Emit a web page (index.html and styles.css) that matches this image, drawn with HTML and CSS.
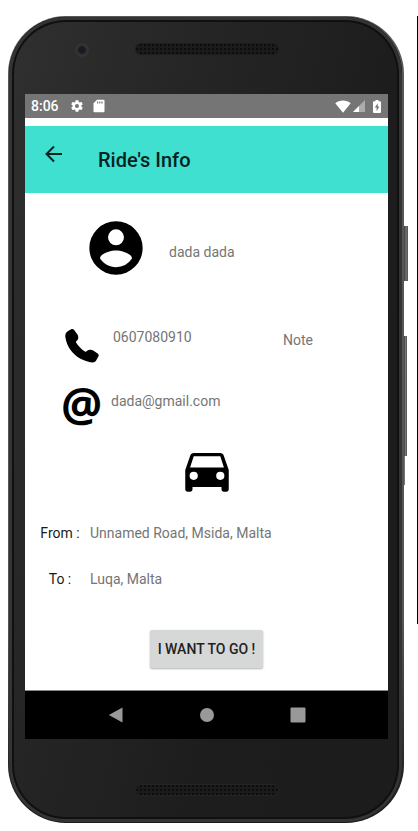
FILE: index.html
```html
<!DOCTYPE html>
<html lang="en">
<head>
<meta charset="utf-8">
<meta name="viewport" content="width=device-width, initial-scale=1">
<title>Ride's Info</title>
<link rel="stylesheet" href="styles.css">
</head>
<body>
<div class="phone">
  <span class="side-key power"></span>
  <span class="side-key volume"></span>
  <span class="side-key edge"></span>
  <div class="face">
    <div class="bezel bezel-top">
      <span class="camera"></span>
      <svg class="speaker" viewBox="0 0 144 12" aria-hidden="true">
        <defs><pattern id="mesh" width="4" height="4" patternUnits="userSpaceOnUse"><rect width="4" height="4" fill="#1b1b1b"/><circle cx="2" cy="2" r="1" fill="#080808"/></pattern></defs>
        <rect x="0.5" y="0.5" width="143" height="11" rx="5.5" fill="url(#mesh)" stroke="#1d1d1d"/>
      </svg>
    </div>
    <div class="screen">
      <div class="status">
        <span class="time">8:06</span>
        <svg class="gear" viewBox="0 0 24 24" aria-hidden="true"><path d="M19.43 12.98c.04-.32.07-.64.07-.98s-.03-.66-.07-.98l2.11-1.65c.19-.15.24-.42.12-.64l-2-3.46c-.12-.22-.39-.3-.61-.22l-2.49 1c-.52-.4-1.08-.73-1.69-.98l-.38-2.65A.49.49 0 0 0 14 2h-4c-.25 0-.46.18-.49.42l-.38 2.65c-.61.25-1.17.59-1.69.98l-2.49-1c-.23-.09-.49 0-.61.22l-2 3.46c-.13.22-.07.49.12.64l2.11 1.65c-.04.32-.07.65-.07.98s.03.66.07.98l-2.11 1.65c-.19.15-.24.42-.12.64l2 3.46c.12.22.39.3.61.22l2.49-1c.52.4 1.08.73 1.69.98l.38 2.65c.03.24.24.42.49.42h4c.25 0 .46-.18.49-.42l.38-2.65c.61-.25 1.17-.59 1.69-.98l2.49 1c.23.09.49 0 .61-.22l2-3.46c.12-.22.07-.49-.12-.64l-2.11-1.65zM12 15.5a3.5 3.5 0 1 1 0-7 3.5 3.5 0 0 1 0 7z"/></svg>
        <svg class="card" viewBox="0 0 12 14" aria-hidden="true"><path fill-rule="evenodd" d="M4 .8h6.500q1 0 1 1v10.400q0 1-1 1h-9q-1 0-1-1V4.300zM4 2.500v2h1.200v-2zm2.200 0v2h1.200v-2zm2.200 0v2h1.200v-2z"/></svg>
        <svg class="wifi" viewBox="0 0 16 13" aria-hidden="true"><path d="M8 12.800.3 3.200C4.500-.4 11.500-.4 15.700 3.200z"/></svg>
        <svg class="signal" viewBox="0 0 12 12" aria-hidden="true"><path fill-opacity=".4" d="M12 0v12H0z"/><path d="M6 6v6H0z"/></svg>
        <svg class="battery" viewBox="0 0 8 13" aria-hidden="true"><path fill-rule="evenodd" d="M2.500 0h3v1.200H7q1 0 1 1V12q0 1-1 1H1q-1 0-1-1V2.200q0-1 1-1h1.500zM4.700 3.200 1.800 7.600h1.800v3.600l2.800-4.600H4.700z"/></svg>
      </div>
      <header class="appbar">
        <button class="back" type="button" aria-label="Back"><svg viewBox="0 0 18 18" aria-hidden="true"><path d="M17 9H2M9 1.500 1.500 9 9 16.500" fill="none" stroke="#06231f" stroke-width="2"/></svg></button>
        <h1>Ride's Info</h1>
      </header>
      <main>
        <section class="profile">
          <svg viewBox="0 0 24 24" aria-hidden="true"><path d="M12 2a10 10 0 1 0 0 20 10 10 0 0 0 0-20zm0 3a3 3 0 1 1 0 6 3 3 0 0 1 0-6zm0 14.200c-2.500 0-4.710-1.280-6-3.220.03-1.990 4-3.080 6-3.080s5.970 1.090 6 3.080A7.200 7.200 0 0 1 12 19.200z"/></svg>
          <span>dada dada</span>
        </section>
        <section class="contact">
          <svg class="handset" viewBox="0 0 34 34" aria-hidden="true"><path d="M2.400 2.600 6 .3Q7.800-.5 9.200 1L12.400 5.600Q13.500 7.200 13.200 9.200 12.900 11.200 11.300 12.200 10.700 12.800 11.200 13.700C13.400 17.200 16.400 20.200 19.900 22.500Q20.900 23 21.500 22.300 22.600 21 24.700 20.800 26.600 20.600 28.200 21.500L32.600 24.400Q34.200 25.600 33.500 27.300L31 31.800Q29.900 33.600 27.900 33.600C14 32.400 1.800 21.400.3 7.600Q-.1 4.300 2.400 2.600z"/></svg>
          <span class="number">0607080910</span>
          <span class="note">Note</span>
        </section>
        <section class="mail">
          <span class="at" aria-hidden="true">@</span>
          <span class="address">dada@gmail.com</span>
        </section>
        <svg class="car" viewBox="0 0 24 24" aria-hidden="true"><path d="M18.920 6.010C18.720 5.420 18.160 5 17.500 5h-11c-.66 0-1.210.42-1.420 1.010L3 12v8c0 .55.450 1 1 1h1c.55 0 1-.45 1-1v-1h12v1c0 .55.450 1 1 1h1c.55 0 1-.45 1-1v-8zM6.500 16.100a1.700 1.700 0 1 1 0-3.400 1.700 1.700 0 0 1 0 3.400zm11 0a1.700 1.700 0 1 1 0-3.400 1.700 1.700 0 0 1 0 3.400zM5 11l1.500-4.700h11L19 11z"/></svg>
        <dl class="route">
          <dt>From :</dt><dd>Unnamed Road, Msida, Malta</dd>
          <dt>To :</dt><dd>Luqa, Malta</dd>
        </dl>
        <button class="go" type="button">I WANT TO GO !</button>
      </main>
      <nav class="keys">
        <button type="button" aria-label="Back"><svg viewBox="0 0 16 16" aria-hidden="true"><path d="M14.500.500v15L.8 8z" stroke-linejoin="round"/></svg></button>
        <button type="button" aria-label="Home"><svg viewBox="0 0 16 16" aria-hidden="true"><circle cx="8" cy="8" r="7"/></svg></button>
        <button type="button" aria-label="Recent apps"><svg viewBox="0 0 16 16" aria-hidden="true"><rect x=".5" y=".5" width="15" height="15" rx="1"/></svg></button>
      </nav>
    </div>
    <div class="bezel bezel-bottom">
      <svg class="speaker" viewBox="0 0 144 12" aria-hidden="true"><rect x="0.5" y="0.5" width="143" height="11" rx="5.5" fill="url(#mesh)" stroke="#242424"/></svg>
    </div>
  </div>
</div>
<span class="rule"></span>
</body>
</html>
```
FILE: styles.css
```css
* { box-sizing: border-box; }

body {
  margin: 0;
  padding: 16px 14px 8px 8px;
  background: #fff;
  font: 14px/20px Roboto, sans-serif;
  color: #757575;
}

svg { display: block; flex: none; }

button {
  margin: 0;
  padding: 0;
  border: 0;
  background: none;
  font: inherit;
}

.phone {
  position: relative;
  padding: 1px 2px 1px 1px;
  border-radius: 58px;
  background: linear-gradient(#59575a, #555 75%, #242424 94%, #1b1b1b);
}

.face {
  padding: 0 14px 0 16px;
  border-radius: 57px;
  background: linear-gradient(105deg, #303031, #262627 30%, #1d1d1d 65%, #1c1c1d);
  box-shadow: inset 0 0 0 3px #343435, inset 0 0 0 5px #101010;
}

.bezel {
  display: flex;
  justify-content: center;
  position: relative;
}

.bezel-top { height: 77px; padding-top: 26px; }
.bezel-bottom { height: 83px; padding-top: 45px; }

.speaker { width: 144px; height: 12px; }

.camera {
  position: absolute;
  left: 50px;
  top: 26px;
  width: 14px;
  height: 14px;
  border-radius: 50%;
  background: radial-gradient(circle at 50% 50%, #1c1920 0 3px, #343334 5px);
}

.side-key {
  position: absolute;
  left: 100%;
  background: linear-gradient(90deg, #3b393b, #777476 50%, #514f51);
}

.power { top: 210px; width: 4px; height: 55px; }
.volume { top: 320px; width: 3px; height: 120px; }
.edge { top: 440px; width: 1px; height: 29px; }

.rule {
  position: absolute;
  right: 0;
  top: 16px;
  width: 1px;
  height: 608px;
  background: #000;
}

.screen { background: #fff; }

.status {
  display: flex;
  align-items: center;
  height: 24px;
  padding: 0 6px;
  background: #757575;
  color: #fff;
  fill: #fff;
}

.time { font-weight: 500; }
.gear { width: 14px; height: 14px; margin-left: 11px; }
.card { width: 12px; height: 14px; margin-left: 9px; }
.wifi { width: 16px; height: 13px; margin-left: auto; }
.signal { width: 12px; height: 12px; margin-left: 2px; }
.battery { width: 8px; height: 13px; margin-left: 8px; margin-right: 1px; }

.appbar {
  display: flex;
  align-items: center;
  height: 67px;
  margin-top: 8px;
  padding-left: 20px;
  background: #40e0d0;
}

.back { margin-bottom: 12px; }
.back svg { width: 18px; height: 18px; }

h1 {
  margin: 0 0 0 35px;
  font-size: 20px;
  line-height: 24px;
  font-weight: 500;
  color: #06231f;
}

main {
  display: flex;
  flex-direction: column;
  padding: 23px 15px 22px;
}

main svg { fill: #000; }

.profile {
  display: flex;
  align-items: center;
  gap: 21px;
  padding-left: 44px;
}

.profile svg { width: 64px; height: 64px; }
.profile span { padding-top: 8px; }

.contact {
  display: flex;
  margin-top: 47px;
  padding: 0 60px 0 25px;
}

.handset { width: 34px; height: 34px; margin-top: 2px; }
.number { margin-left: 14px; }
.note { margin: 3px 0 0 auto; }

.mail {
  display: flex;
  align-items: center;
  gap: 10px;
  height: 40px;
  margin-top: 20px;
  padding-left: 21px;
}

.address { padding-bottom: 4px; }

.at {
  width: 40px;
  font: bold 46px/40px "Open Sans", sans-serif;
  color: #000;
}

.car { width: 58px; height: 58px; margin-top: 18px; align-self: center; }

.route {
  display: grid;
  grid-template-columns: 40px 1fr;
  gap: 26px 10px;
  margin: 24px 0 0;
}

dt { text-align: center; color: #1a1a1a; }
dd { margin: 0; }

.go {
  align-self: center;
  height: 38px;
  margin-top: 41px;
  padding: 0 8px;
  border-radius: 2px;
  background: #d6d7d7;
  box-shadow: 0 1px 2px rgba(0, 0, 0, .3);
  font-weight: 500;
  color: #212121;
}

.keys {
  display: flex;
  justify-content: center;
  align-items: center;
  gap: 75px;
  height: 49px;
  border-top: 1px solid #888;
  background: #000;
}

.keys svg { width: 16px; height: 16px; fill: #999; }
```
